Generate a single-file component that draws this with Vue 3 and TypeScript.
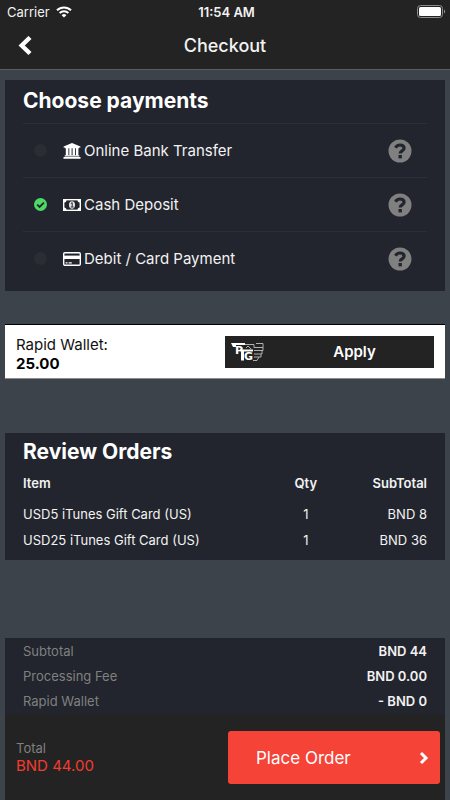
<script setup lang="ts">
import { ref } from 'vue'

type Method = { id: string; label: string; icon: 'bank' | 'cash' | 'card' }

const methods: Method[] = [
  { id: 'bank', label: 'Online Bank Transfer', icon: 'bank' },
  { id: 'cash', label: 'Cash Deposit', icon: 'cash' },
  { id: 'card', label: 'Debit / Card Payment', icon: 'card' },
]
const selected = ref('cash')

const orders = [
  { item: 'USD5 iTunes Gift Card (US)', qty: 1, subtotal: 'BND 8' },
  { item: 'USD25 iTunes Gift Card (US)', qty: 1, subtotal: 'BND 36' },
]

const summary = [
  { label: 'Subtotal', value: 'BND 44' },
  { label: 'Processing Fee', value: 'BND 0.00' },
  { label: 'Rapid Wallet', value: '- BND 0' },
]
</script>

<template>
  <div class="screen">
    <header class="top">
      <div class="status">
        <div class="carrier">
          <span>Carrier</span>
          <svg width="16" height="12" viewBox="0 0 16 12" fill="none" stroke="#fff" aria-hidden="true">
            <path d="M1 4.3a10 10 0 0 1 14 0" stroke-width="2" />
            <path d="M3.6 7a6.3 6.3 0 0 1 8.8 0" stroke-width="1.9" />
            <path d="M8 11.6 5.6 9.2a3.4 3.4 0 0 1 4.8 0z" fill="#fff" stroke="none" />
          </svg>
        </div>
        <span class="time">11:54 AM</span>
        <svg class="battery" width="29" height="13" viewBox="0 0 29 13" aria-hidden="true">
          <rect x=".5" y=".5" width="25" height="12" rx="3" fill="none" stroke="#8c8c8c" />
          <rect x="2" y="2" width="22" height="9" rx="1.5" fill="#fff" />
          <path d="M27 4.5c1.6.7 1.6 3.3 0 4z" fill="#8c8c8c" />
        </svg>
      </div>
      <nav class="bar">
        <button class="back" type="button" aria-label="Back">
          <svg width="14" height="20" viewBox="0 0 14 20" aria-hidden="true">
            <path d="M12 1.500 3.700 9.500l8.300 8" fill="none" stroke="#fff" stroke-width="4.400" />
          </svg>
        </button>
        <h1>Checkout</h1>
      </nav>
    </header>

    <main class="content">
      <section class="panel payments">
        <h2>Choose payments</h2>
        <ul class="methods">
          <li v-for="m in methods" :key="m.id">
            <label class="method">
              <span class="radio">
                <input v-model="selected" type="radio" name="method" :value="m.id" />
                <svg v-if="selected === m.id" width="13" height="13" viewBox="0 0 13 13" aria-hidden="true">
                  <path d="m3.2 6.6 2.4 2.4 4.3-4.4" fill="none" stroke="#22252d" stroke-width="1.8" />
                </svg>
              </span>
              <svg v-if="m.icon === 'bank'" class="icon" width="18" height="16" viewBox="0 0 18 16" fill="#fff" aria-hidden="true">
                <path d="M9 0 17.4 3.4v1.1H16.2v.7H1.8v-.7H.6V3.4z" />
                <path d="M2.8 5h2.6v7.400H2.8zM6.3 5h2.3v7.400H6.300zM9.600 5H12v7.400H9.600zM12.900 5h2.500v7.400h-2.500z" />
                <path d="M1.7 12.2h14.6v1.200H1.7zM.5 13.900h17v1.800H.5z" />
              </svg>
              <svg v-else-if="m.icon === 'cash'" class="icon" width="18" height="12" viewBox="0 0 18 12" aria-hidden="true">
                <rect x=".7" y=".7" width="16.6" height="10.6" fill="none" stroke="#fff" stroke-width="1.4" />
                <path d="M1 1h2.500a2.500 2.500 0 0 1-2.500 2.500zM17 1h-2.500a2.500 2.500 0 0 0 2.500 2.500zM1 11h2.500a2.500 2.500 0 0 0-2.500-2.500zM17 11h-2.500a2.500 2.500 0 0 1 2.500-2.500z" fill="#fff" />
                <ellipse cx="9" cy="6" rx="3" ry="3.7" fill="#e8e8e8" />
                <path d="M7.8 4.5 9.2 3.7v4M7.7 8h3" fill="none" stroke="#22252d" stroke-width="1" />
              </svg>
              <svg v-else class="icon" width="18" height="14" viewBox="0 0 18 14" aria-hidden="true">
                <rect x=".7" y=".7" width="16.6" height="12.6" rx="1.2" fill="none" stroke="#fff" stroke-width="1.4" />
                <path d="M1 3.6h16v3.4H1z" fill="#fff" />
                <path d="M2.6 10.8h2M5.6 10.8h3.2" stroke="#fff" stroke-width="1.2" />
              </svg>
              <span class="name">{{ m.label }}</span>
            </label>
            <button class="help" type="button" :aria-label="'About ' + m.label">
              <svg width="24" height="24" viewBox="0 0 24 24" aria-hidden="true">
                <circle cx="12" cy="12" r="11.5" fill="#808080" />
                <path d="M7.500 8.700C8.500 6.800 9.900 6 11.900 6c2.500 0 4.200 1.300 4.200 3.200 0 2.700-3.900 2.700-3.900 5.300" fill="none" stroke="#22252d" stroke-width="3.200" />
                <path d="M10.500 16h3.400v3.400h-3.400z" fill="#22252d" />
              </svg>
            </button>
          </li>
        </ul>
      </section>

      <section class="wallet">
        <div class="balance">
          <span>Rapid Wallet:</span>
          <strong>25.00</strong>
        </div>
        <button class="apply" type="button">
          <svg width="34" height="20" viewBox="0 0 34 20" aria-hidden="true">
            <path d="M14 2.500h9v3h9M25 1.500h7v7h-9M31 8.500v3.500h-8M30 12v3h-7M28 15l-2 3.500h-4M15 6l2-2 3 3" fill="none" stroke="#b0b0b0" />
            <path d="M0 1h14v2H5v2H2z" fill="#fff" />
            <text x="4" y="12" class="mark">P</text>
            <path d="M9 7.500h13v2H13v9H10V10.500z" fill="#fff" />
            <text x="13" y="18" class="mark">G</text>
          </svg>
          <span>Apply</span>
        </button>
      </section>

      <section class="panel review">
        <h2>Review Orders</h2>
        <table>
          <thead>
            <tr><th>Item</th><th class="qty">Qty</th><th class="sum">SubTotal</th></tr>
          </thead>
          <tbody>
            <tr v-for="o in orders" :key="o.item">
              <td>{{ o.item }}</td><td class="qty">{{ o.qty }}</td><td class="sum">{{ o.subtotal }}</td>
            </tr>
          </tbody>
        </table>
      </section>
    </main>

    <footer class="bottom">
      <dl class="summary">
        <div v-for="s in summary" :key="s.label">
          <dt>{{ s.label }}</dt>
          <dd>{{ s.value }}</dd>
        </div>
      </dl>
      <div class="checkout">
        <div class="total">
          <span>Total</span>
          <strong>BND 44.00</strong>
        </div>
        <button class="place" type="button">
          <span>Place Order</span>
          <svg width="10" height="14" viewBox="0 0 10 14" aria-hidden="true">
            <path d="m2 2 5 5-5 5" fill="none" stroke="#fff" stroke-width="3" />
          </svg>
        </button>
      </div>
    </footer>
  </div>
</template>

<style>
body {
  margin: 0;
  background: #3d434b;
}
</style>

<style scoped>
.screen {
  display: flex;
  flex-direction: column;
  min-height: 100vh;
  background: #3d434b;
  color: #f2f2f2;
  font-family: Inter, "Liberation Sans", sans-serif;
  font-size: 15px;
  line-height: 20px;
}
button {
  margin: 0;
  padding: 0;
  border: 0;
  background: none;
  color: inherit;
  font: inherit;
  cursor: pointer;
}
svg {
  display: block;
  flex: none;
}
h1,
h2,
ul,
dl,
dd {
  margin: 0;
  padding: 0;
}
.top {
  padding-bottom: 1px;
  background: #232323;
  border-bottom: 1px solid #5c5f62;
}
.status {
  display: grid;
  grid-template-columns: 1fr auto 1fr;
  align-items: center;
  height: 23px;
  padding: 0 4px 0 7px;
  font-size: 13px;
}
.carrier {
  display: flex;
  align-items: center;
  gap: 6px;
}
.time {
  font-weight: 600;
}
.battery {
  justify-self: end;
}
.bar {
  display: grid;
  grid-template-columns: 1fr auto 1fr;
  align-items: center;
  height: 45px;
  padding: 0 18px;
}
.back {
  justify-self: start;
}
h1 {
  font-size: 18px;
  font-weight: 500;
  line-height: 24px;
}
.content {
  display: flex;
  flex-direction: column;
  padding: 10px 5px 0;
}
.panel {
  background: #22252d;
  padding: 0 18px;
}
h2 {
  color: #fff;
  font-size: 21px;
  font-weight: 700;
  line-height: 37px;
}
.payments {
  padding-top: 2px;
  padding-bottom: 6px;
}
.methods {
  padding-top: 4px;
  list-style: none;
}
.methods li {
  display: flex;
  align-items: center;
  justify-content: space-between;
  box-sizing: border-box;
  height: 54px;
  padding: 0 15px 0 11px;
  border-top: 1px solid #2c2f34;
}
.method {
  display: flex;
  align-items: center;
  cursor: pointer;
}
.radio {
  display: grid;
  margin-right: 16px;
}
.radio > * {
  grid-area: 1 / 1;
}
.radio svg {
  pointer-events: none;
}
.radio input {
  appearance: none;
  width: 13px;
  height: 13px;
  margin: 0;
  border-radius: 50%;
  background: #2a2d34;
}
.radio input:checked {
  background: #4cd964;
}
.icon {
  margin-right: 3px;
}
.wallet {
  display: flex;
  align-items: center;
  justify-content: space-between;
  margin: 33px 0 54px;
  padding: 5px 11px;
  border-top: 1px solid #000;
  border-bottom: 1px solid #8c8c8c;
  background: #fff;
  color: #111;
}
.balance {
  display: flex;
  flex-direction: column;
  padding-top: 5px;
  line-height: 19px;
}
.balance strong {
  color: #000;
}
.apply {
  display: flex;
  align-items: center;
  width: 50%;
  height: 32px;
  padding: 0 6px;
  background: #232323;
  color: #fff;
  font-weight: 600;
}
.apply span {
  flex: 1;
  padding-left: 16px;
}
.mark {
  fill: #fff;
  font: 700 11px "DejaVu Sans", sans-serif;
}
.review {
  padding-bottom: 7px;
}
table {
  width: 100%;
  border-collapse: collapse;
  table-layout: fixed;
  font-size: 13px;
}
th,
td {
  height: 26px;
  padding: 0;
  text-align: left;
}
th {
  padding-bottom: 5px;
  font-weight: 600;
}
.qty {
  width: 24%;
  text-align: center;
}
.sum {
  width: 18%;
  text-align: right;
}
.bottom {
  margin-top: auto;
  padding: 0 5px;
}
.summary {
  padding: 0 18px 1px;
  background: #22252d;
  font-size: 13px;
}
.summary div {
  display: flex;
  align-items: center;
  justify-content: space-between;
  height: 25px;
}
dt {
  color: #808080;
}
dd {
  font-weight: 600;
}
.checkout {
  display: flex;
  align-items: center;
  justify-content: space-between;
  padding: 17px 5px 16px 11px;
  background: #232323;
}
.total {
  display: flex;
  flex-direction: column;
  padding-bottom: 2px;
  color: #808080;
  font-size: 13px;
  line-height: 17px;
}
.total strong {
  color: #f43b30;
  font-size: 15px;
  font-weight: 400;
}
.place {
  display: flex;
  align-items: center;
  justify-content: space-between;
  width: 50%;
  height: 53px;
  padding: 0 11px 0 28px;
  border-radius: 3px;
  background: #f54337;
  color: #fff;
  font-size: 17px;
}
</style>
